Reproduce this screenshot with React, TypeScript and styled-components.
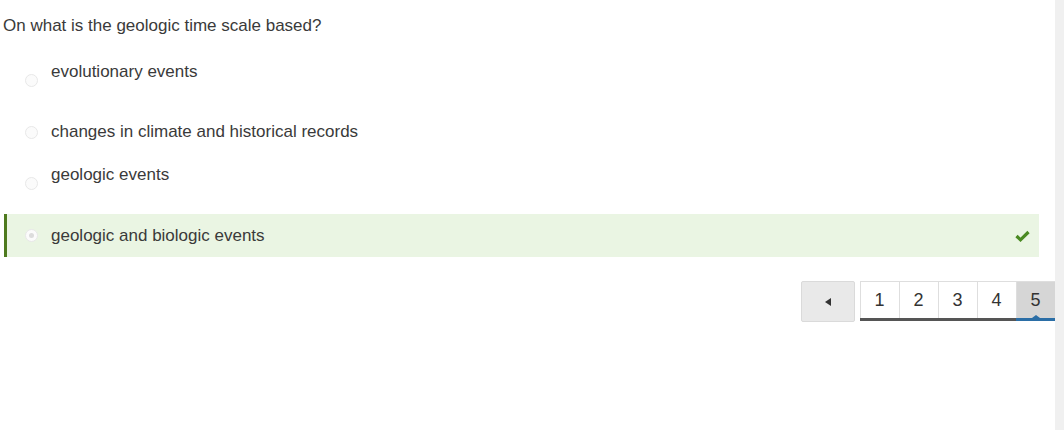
import React from "react";
import styled, { createGlobalStyle, css } from "styled-components";

const GlobalStyle = createGlobalStyle`
  html, body { margin: 0; padding: 0; background: #fff; }
  body { font-family: "Liberation Sans", Arial, sans-serif; color: #333; }
`;

const Page = styled.div`
  display: flex;
  width: 1064px;
  height: 430px;
  overflow: hidden;
`;

const Main = styled.main`
  flex: 1;
  display: flex;
  flex-direction: column;
  padding-top: 16px;
`;

const ScrollTrack = styled.div`
  width: 9px;
  background: #f0f0f0;
`;

const Question = styled.p`
  margin: 0 0 23px 3px;
  font-size: 17px;
  line-height: 20px;
  color: #3a3a3a;
`;

const Options = styled.div`
  display: flex;
  flex-direction: column;
  gap: 8.7px;
  margin: 0 16px 0 4px;
`;

const Row = styled.label<{ $correct?: boolean }>`
  display: flex;
  align-items: center;
  height: 43px;
  padding: 0 9px 0 18px;
  border-left: 3px solid transparent;
  ${(p) =>
    p.$correct &&
    css`
      background: #eaf5e3;
      border-left-color: #4e7a1e;
    `}
`;

const Radio = styled.span<{ $checked?: boolean }>`
  box-sizing: border-box;
  width: 13px;
  height: 13px;
  border-radius: 50%;
  border: 1px solid #e8e8e8;
  background: #fbfbfb;
  display: flex;
  align-items: center;
  justify-content: center;
  flex: none;
  &::after {
    content: "";
    width: 5px;
    height: 5px;
    border-radius: 50%;
    background: ${(p) => (p.$checked ? "#dcdcdc" : "transparent")};
  }
`;

const OptionText = styled.span<{ $lift?: boolean }>`
  flex: 1;
  margin-left: 13px;
  font-size: 17px;
  line-height: 20px;
  color: #3a3a3a;
  padding-bottom: ${(p) => (p.$lift ? "18px" : "0")};
`;

const Check = styled.svg`
  width: 15px;
  height: 12px;
`;

const Pager = styled.nav`
  display: flex;
  justify-content: flex-end;
  align-items: flex-start;
  gap: 5px;
  margin-top: 24px;
`;

const PrevButton = styled.button`
  box-sizing: border-box;
  width: 54px;
  height: 41px;
  background: #e9e9e9;
  border: 1px solid #dadada;
  border-radius: 2px;
  display: flex;
  align-items: center;
  justify-content: center;
  padding: 0;
`;

const Triangle = styled.span`
  width: 0;
  height: 0;
  border-top: 4px solid transparent;
  border-bottom: 4px solid transparent;
  border-right: 6px solid #333;
`;

const PageList = styled.div`
  display: flex;
  border-top: 1px solid #dedede;
`;

const PageItem = styled.span<{ $active?: boolean }>`
  position: relative;
  box-sizing: border-box;
  width: 39px;
  height: 39px;
  display: flex;
  align-items: center;
  justify-content: center;
  font-size: 18px;
  color: #333;
  background: ${(p) => (p.$active ? "#d6d6d6" : "#fff")};
  box-shadow: inset 1px 0 0 #dedede;
  border-bottom: 3px solid ${(p) => (p.$active ? "#2b6ea6" : "#555")};
  padding-top: 1px;
  ${(p) =>
    p.$active &&
    css`
      &::after {
        content: "";
        position: absolute;
        left: 50%;
        bottom: 0;
        margin-left: -4px;
        border-left: 4px solid transparent;
        border-right: 4px solid transparent;
        border-bottom: 3px solid #2b6ea6;
      }
    `}
`;

const options = [
  { text: "evolutionary events", lift: true },
  { text: "changes in climate and historical records" },
  { text: "geologic events", lift: true },
  { text: "geologic and biologic events", correct: true },
];

export default function App() {
  return (
    <>
      <GlobalStyle />
      <Page>
        <Main>
          <Question>On what is the geologic time scale based?</Question>
          <Options>
            {options.map((o) => (
              <Row key={o.text} $correct={o.correct}>
                <Radio $checked={o.correct} />
                <OptionText $lift={o.lift}>{o.text}</OptionText>
                {o.correct && (
                  <Check viewBox="0 0 15 12">
                    <path
                      d="M1.5 6 L5.5 9.8 L13.5 2"
                      fill="none"
                      stroke="#4a8a22"
                      strokeWidth="3.2"
                    />
                  </Check>
                )}
              </Row>
            ))}
          </Options>
          <Pager>
            <PrevButton aria-label="previous">
              <Triangle />
            </PrevButton>
            <PageList>
              {[1, 2, 3, 4, 5].map((n) => (
                <PageItem key={n} $active={n === 5}>
                  {n}
                </PageItem>
              ))}
            </PageList>
          </Pager>
        </Main>
        <ScrollTrack />
      </Page>
    </>
  );
}
